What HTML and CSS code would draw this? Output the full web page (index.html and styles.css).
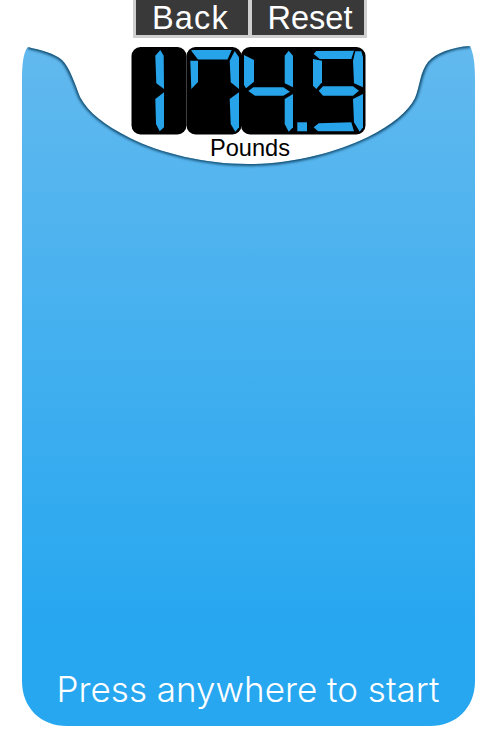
FILE: index.html
```html
<!DOCTYPE html>
<html lang="en">
<head>
<meta charset="utf-8">
<title>Scale</title>
<link rel="stylesheet" href="styles.css">
</head>
<body>
<main class="stage">
  <svg class="panel" viewBox="0 0 500 750" aria-hidden="true">
    <defs>
      <linearGradient id="panelFill" x1="0" y1="0" x2="0" y2="1">
        <stop offset="0" stop-color="#62b9ee"/>
        <stop offset="0.85" stop-color="#27a7f0"/>
        <stop offset="1" stop-color="#27a7f0"/>
      </linearGradient>
      <clipPath id="panelClip"><path d="M22 80C22 66 23 52 28 47C40 50 54 53 62 60C70 68 75 84 80 97C88 112 104 125 130 138C160 153 205 164 248 164C292 164 335 153 368 137C392 125 408 112 415 98C420 86 420 72 428 62C436 53 452 47 470 46C474 54 475 66 475 80V681C475 708 456 726 430 726H67C41 726 22 708 22 681Z"/></clipPath>
      <filter id="soft" x="-10%" y="-50%" width="120%" height="200%"><feGaussianBlur stdDeviation="1.6"/></filter>
    </defs>
    <g clip-path="url(#panelClip)">
      <rect x="20" y="44" width="458" height="684" fill="url(#panelFill)"/>
      <path class="rim" filter="url(#soft)" d="M28 47C40 50 54 53 62 60C70 68 75 84 80 97C88 112 104 125 130 138C160 153 205 164 248 164C292 164 335 153 368 137C392 125 408 112 415 98C420 86 420 72 428 62C436 53 452 47 470 46"/>
    </g>
  </svg>

  <nav class="toolbar">
    <button class="tool-btn tool-btn-back" type="button">Back</button>
    <button class="tool-btn tool-btn-reset" type="button">Reset</button>
  </nav>

  <svg class="display" viewBox="128 44 240 94" role="img" aria-label="174.9">
    <rect class="lcd-bg" x="131.5" y="47" width="55" height="87.5" rx="9"/>
    <rect class="lcd-bg" x="186.5" y="47" width="55" height="87.5" rx="9"/>
    <rect class="lcd-bg" x="241" y="47" width="124.5" height="87.5" rx="9"/>
    <g class="lcd-on">
      <polygon points="160.3,50 163.7,55.7 164,89 156.3,83.3 155.3,55.7"/>
      <polygon points="164,92.3 164,127.3 159.7,131.3 156,124 155.3,99"/>

      <polygon points="191,50.5 193,50 231.7,50 227.5,59.5 198,59.5"/>
      <polygon points="190.3,60.7 198,60.7 198,82 191.3,89"/>
      <polygon points="234.7,51 239,57.3 239,89 230.7,82.3 229.7,60.7"/>
      <polygon points="239,92.3 239,127.3 235.3,131.7 230.7,124 229.7,99"/>

      <polygon points="244,55 254,60 254,81.7 246,88.3 244,85"/>
      <polygon points="248.3,91 253.3,87.3 283.3,87.3 290,91.7 283.3,95.7 255,95.7"/>
      <polygon points="288.7,50.7 293,55.7 293,87.3 284.7,83.3 284.7,55.7"/>
      <polygon points="293,94 293,127.3 288.7,131.7 284.7,124 284.7,99"/>
      <rect x="297.3" y="122.3" width="9.7" height="9"/>

      <polygon points="313.7,54 316.3,51 354,50.7 351.3,59 319.7,59"/>
      <polygon points="313,59 322,60.7 322,82.3 316.3,89 313,85.7"/>
      <polygon points="355.3,51.3 361.3,51.3 363,57.3 363,87.3 354,83.3 353,60.7"/>
      <polygon points="318.7,90.7 323,86.3 353,86.3 359,90.7 353,95.7 323,95.7"/>
      <polygon points="363,94 363,127.3 359.7,131.7 354,122.3 353,99"/>
      <polygon points="313.7,127.3 318.7,123.3 351.3,122.3 354,131.3 318,131.3"/>
    </g>
  </svg>

  <p class="unit">Pounds</p>
  <p class="hint">Press anywhere to start</p>
</main>
</body>
</html>
```

FILE: styles.css
```css
* { box-sizing: border-box; }

html, body {
  margin: 0;
  background: #fff;
}

.stage {
  position: relative;
  width: 500px;
  height: 750px;
  display: flex;
  flex-direction: column;
  align-items: center;
  overflow: hidden;
  font-family: "Liberation Sans", Arial, sans-serif;
}

.panel {
  position: absolute;
  inset: 0;
  width: 500px;
  height: 750px;
}

.rim {
  fill: none;
  stroke: #06304f;
  stroke-width: 3;
}

.toolbar {
  position: relative;
  display: flex;
  gap: 4px;
  width: 234px;
  height: 38px;
  padding: 0 3px 3px;
  background: #cfcfcf;
}

.tool-btn {
  flex: 0 0 112px;
  height: 35px;
  padding: 1px 0 0;
  border: 0;
  background: #393939;
  color: #fff;
  font: 32.5px/34px "Liberation Sans", Arial, sans-serif;
}

.tool-btn-back {
  padding-right: 3px;
  letter-spacing: 1.2px;
}

.tool-btn-reset {
  padding-left: 4px;
}

.display {
  position: relative;
  display: block;
  width: 240px;
  height: 94px;
  margin: 6px 4px 0 0;
}

.lcd-bg { fill: #000; }
.lcd-on { fill: #27a3ea; }

.unit {
  position: relative;
  margin: -3px 0 0;
  color: #000;
  font-size: 23.6px;
  line-height: 26px;
}

.hint {
  position: relative;
  margin: auto 4px 39px 0;
  color: #fff;
  font-family: Inter, "Liberation Sans", Arial, sans-serif;
  font-weight: 350;
  font-size: 35px;
  line-height: 44px;
}
```
